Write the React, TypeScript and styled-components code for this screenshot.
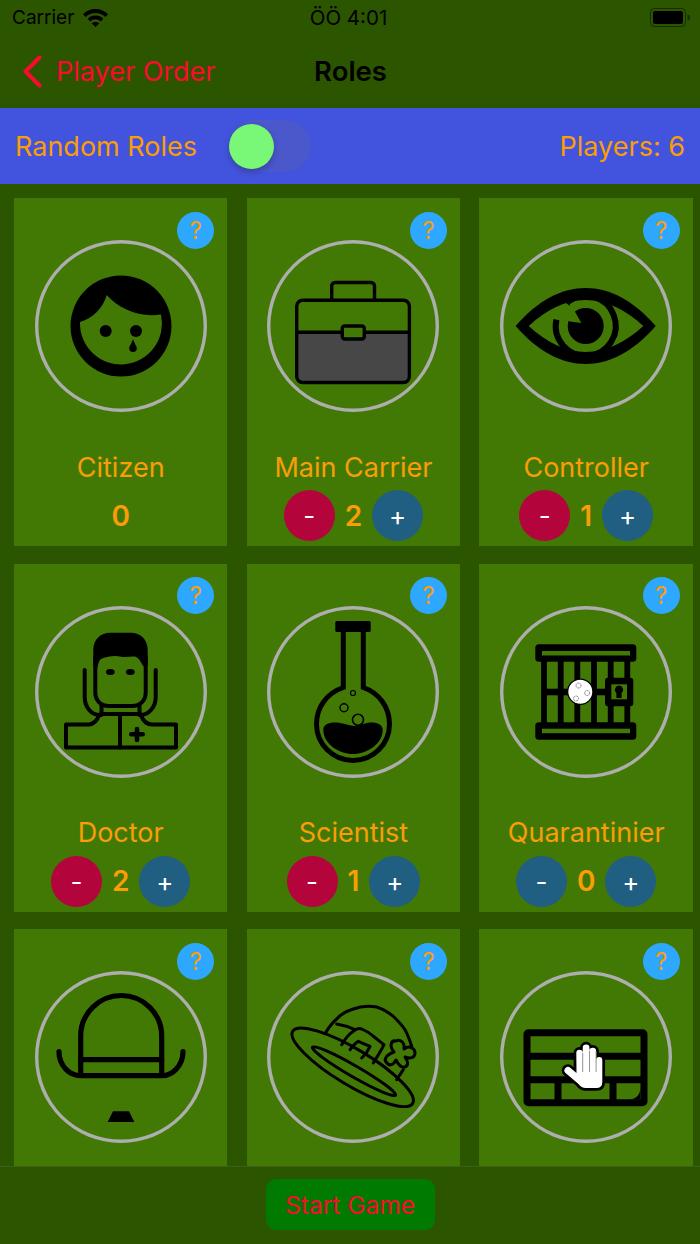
import React from "react";
import styled, { createGlobalStyle } from "styled-components";

const Global = createGlobalStyle`
  html, body { margin: 0; padding: 0; height: 1244px; overflow: hidden; background: #2c5500; }
  #root { height: 1244px; }
  * { box-sizing: border-box; }
`;

const font = `Inter, "Liberation Sans", sans-serif`;
const orange = "#fa9d06";
const red = "#fb0a2d";

const Page = styled.div`
  width: 700px; height: 1244px; display: flex; flex-direction: column;
  background: #2c5500; font-family: ${font};
`;
const Header = styled.header`
  height: 108px; flex: none; display: flex; flex-direction: column;
`;
const StatusBar = styled.div`
  height: 35px; display: grid; grid-template-columns: 1fr auto 1fr; align-items: center;
  padding: 0 9px 0 12px; color: #000; font-size: 19px;
`;
const StatusLeft = styled.div`
  display: flex; align-items: center; gap: 9px;
`;
const Clock = styled.span`
  font-size: 20.5px; margin-right: 6px;
`;
const StatusRight = styled.div`
  display: flex; justify-content: flex-end;
`;
const Nav = styled.nav`
  height: 73px; display: grid; grid-template-columns: 1fr auto 1fr; align-items: center;
  padding: 0 22px 1px; font-size: 27px;
`;
const Back = styled.div`
  display: flex; align-items: center; gap: 14px; color: ${red};
`;
const Title = styled.div`
  font-size: 27.5px; font-weight: 600; color: #000; margin-left: 1px;
`;
const OptionBar = styled.section`
  height: 76px; flex: none; display: flex; align-items: center; padding: 1px 15px 0;
  background: #4254de; color: ${orange}; font-size: 27px;
`;
const SwitchTrack = styled.div`
  width: 83px; height: 52px; margin: -1px 0 0 31px; border-radius: 26px;
  background: #4a58cc; padding: 3.5px 0 0 1px;
`;
const SwitchThumb = styled.div`
  width: 45px; height: 45px; border-radius: 50%; background: #78f876;
  box-shadow: 0 3px 6px rgba(0, 0, 0, 0.25);
`;
const Players = styled.div`
  margin-left: auto;
`;
const Main = styled.main`
  flex: 1; min-height: 0; overflow: hidden; padding: 14px 7px 0 13.9px;
  display: grid; grid-template-columns: repeat(3, 1fr); column-gap: 19.2px;
  row-gap: 17.5px; grid-auto-rows: 348px;
`;
const Card = styled.article`
  position: relative; background: #427905; display: flex; flex-direction: column;
  align-items: center; padding-top: 42.3px;
`;
const Help = styled.div`
  position: absolute; top: 13.7px; right: 13.3px; width: 37px; height: 37px; border-radius: 50%;
  background: #2ea7fe; color: ${orange}; font-size: 24px; display: flex;
  align-items: center; justify-content: center;
`;
const Circle = styled.div`
  width: 172px; height: 172px; border-radius: 50%; flex: none;
  box-shadow: inset 0 0 0 3.4px #aeaeae;
`;
const Label = styled.div`
  margin-top: 38.6px; height: 33px; line-height: 33px; font-size: 27px; color: ${orange};
  white-space: nowrap;
`;
const Controls = styled.div`
  margin-top: 6.4px; height: 51px; display: flex; align-items: center; gap: 10px;
`;
const Count = styled.div`
  font-size: 28px; font-weight: 600; color: ${orange};
`;
const Round = styled.div<{ $bg: string }>`
  width: 51px; height: 51px; border-radius: 50%; background: ${(p) => p.$bg};
  color: #fff; font-size: 26px; display: flex; align-items: center; justify-content: center;
`;
const Footer = styled.footer`
  height: 78px; flex: none; border-top: 1px solid #3d6018; background: #2c5500;
  display: flex; justify-content: center; padding-top: 12px;
`;
const StartButton = styled.div`
  width: 169px; height: 51px; border-radius: 10px; background: #007a00; color: ${red};
  font-size: 24.5px; display: flex; align-items: center; justify-content: center;
`;

const Ic: React.FC<{ children: React.ReactNode }> = ({ children }) => (
  <svg width={172} height={172} viewBox="0 0 172 172" style={{ display: "block" }}>{children}</svg>
);
const G = "#427905";

const Citizen = () => (
  <Ic>
    <circle cx="86" cy="86" r="50.5" fill="#000" />
    <path d="M45 82C58 78 68 68 71.7 55C84 69 105 78 126 74.5A41 41 0 1 1 45 82Z" fill={G} />
    <circle cx="70.7" cy="91" r="6" fill="#000" />
    <circle cx="101" cy="91" r="6" fill="#000" />
    <path d="M98 99C96.5 104 94.2 106 94.2 108.2a3.8 3.8 0 0 0 7.6 0C101.8 106 99.5 104 98 99Z" fill="#000" />
  </Ic>
);
const Carrier = () => (
  <Ic>
    <path d="M29.5 92.3H142.5V137a5.5 5.5 0 0 1-5.5 5.5H35a5.5 5.5 0 0 1-5.5-5.5Z" fill="#474747" />
    <g fill="none" stroke="#000" strokeWidth="3.4" strokeLinejoin="round">
      <rect x="29.7" y="60.3" width="112.7" height="82.2" rx="6" />
      <path d="M64.7 60V46a3.5 3.5 0 0 1 3.5-3.5H104a3.5 3.5 0 0 1 3.5 3.5V60" />
      <path d="M29.7 92.3H75M97 92.3H142.4" />
      <rect x="75.3" y="86" width="22" height="13" rx="2.5" fill={G} />
    </g>
  </Ic>
);
const Eye = () => (
  <Ic>
    <path d="M15.7 86C38 60 62 48 85.7 48S133 60 155.7 86C133 112 109 124 85.7 124S38 112 15.7 86Z" fill="#000" />
    <path d="M28.7 86C46 70 65 60 85.7 60S126 70 143.3 86C126 102 106 112 85.7 112S46 102 28.7 86Z" fill={G} />
    <path d="M56.4 79.7A30 30 0 1 0 67 62.5" fill="none" stroke="#000" strokeWidth="6" />
    <circle cx="85.7" cy="86" r="18" fill="#000" />
    <path d="M68.3 81.3L81.3 83L74.7 71.3L64 68Z" fill={G} />
    <path d="M64.7 62L70 66L68 58Z" fill="#000" />
  </Ic>
);
const Doctor = () => (
  <Ic>
    <path d="M58.3 60V44C58.3 33 66 26.7 75 26.7H96C105 26.7 112.7 33 112.7 44V60L108 60C106 56 104 52 100 50.5C95 50 90 52 85 50.5C80 49 72 50.5 67 52.5C64 54 63 58 62.5 62Z" fill="#000" />
    <path d="M60.3 50V86C60.3 95 66 100 74 100H97C105 100 110.7 95 110.7 86V50" fill="none" stroke="#000" strokeWidth="4" />
    <ellipse cx="75.3" cy="66" rx="4.4" ry="2.9" fill="#000" />
    <ellipse cx="95.3" cy="66" rx="4.4" ry="2.9" fill="#000" />
    <g fill="none" stroke="#000" strokeWidth="4" strokeLinecap="round" strokeLinejoin="round">
      <path d="M49.7 64V91C49.7 101 56 109 65 109H66.5V99" />
      <path d="M120.7 64V91C120.7 101 114 109 105 109H104.5V99" />
      <path d="M66 108H105" />
      <path d="M64 109C62 115 59 118 54 118.4H31V141.5H141V118.4H117C112 118.4 108 115 106 109" />
      <path d="M85 109V141.5" />
    </g>
    <path d="M102 123V134M96.3 128.3H107.7" stroke="#000" strokeWidth="4.6" strokeLinecap="round" />
  </Ic>
);
const Flask = () => (
  <Ic>
    <rect x="68.3" y="15" width="35.4" height="11" rx="1.5" fill="#000" />
    <path d="M76.3 24V81.5C60 87 49.5 101 49.5 118A36.5 36.5 0 0 0 122.5 118C122.5 101 112 87 96.3 81.5V24" fill="none" stroke="#000" strokeWidth="5" />
    <path d="M56.3 124C56 116 68 115 78 118C84 120 90 121 96 118C104 115 115.7 116 115.7 124C115.7 138 100 148 86 148C72 148 56.5 138 56.3 124Z" fill="#000" />
    <g fill="none" stroke="#000">
      <circle cx="86" cy="87" r="2.5" strokeWidth="1.2" />
      <circle cx="77" cy="101.7" r="4" strokeWidth="1.4" />
      <circle cx="91" cy="113.7" r="5.5" strokeWidth="1.6" />
    </g>
  </Ic>
);
const Cage = () => (
  <Ic>
    <rect x="35.3" y="38.3" width="101" height="17.4" rx="3.5" fill="#000" />
    <rect x="42" y="45" width="88" height="4.5" fill={G} />
    <rect x="35.3" y="116.3" width="101" height="17.4" rx="3.5" fill="#000" />
    <rect x="42" y="122.7" width="88" height="4.5" fill={G} />
    {[44, 60.7, 77.3, 94, 110.7, 127.3].map((x) => (
      <rect key={x} x={x - 2.9} y="54" width="5.8" height="64" fill="#000" />
    ))}
    <rect x="44" y="82.7" width="70" height="6.6" fill="#000" />
    <rect x="105" y="71.7" width="28.3" height="28.6" rx="3" fill="#000" />
    <rect x="111.3" y="78.3" width="15.7" height="15" fill={G} />
    <path d="M119 79.5a4.3 4.3 0 0 1 2.6 7.6V92H116.4V87.1A4.3 4.3 0 0 1 119 79.5Z" fill="#000" />
    <circle cx="80.3" cy="85.7" r="12.6" fill="#fff" stroke="#000" strokeWidth="1.2" />
    <g fill="none" stroke="#666" strokeWidth="1" strokeDasharray="1 .6">
      <circle cx="78.5" cy="79.5" r="2.5" />
      <circle cx="87.2" cy="87" r="2.5" />
      <circle cx="76" cy="92.5" r="2.5" />
    </g>
  </Ic>
);
const Bowler = () => (
  <Ic>
    <g fill="none" stroke="#000" strokeWidth="5.2" strokeLinecap="round">
      <path d="M45.7 104V65A40.5 40.5 0 0 1 126.7 65V104" />
      <path d="M45.7 88.7H126.7" />
      <path d="M24 80.7C24 94 34 104.7 45.7 104.7H126.7C138 104.7 148 94 148 80.7" />
    </g>
    <path d="M78 140.3H94L99.3 151H72.7Z" fill="#000" />
  </Ic>
);
const Hat = () => (
  <Ic>
    <g fill="none" stroke="#000" strokeWidth="3" strokeLinecap="round" strokeLinejoin="round">
      <ellipse cx="85.7" cy="96.3" rx="70" ry="18" transform="rotate(31 85.7 96.3)" />
      <ellipse cx="87" cy="100.2" rx="48" ry="5.5" transform="rotate(30 87 100.2)" />
      <path d="M58 62.7C62 56 65 52 69.7 48C74 43 80 40 86.3 38C94 35 103 35 109.7 36C116 38 121 41 126.3 45.3C131 50 135 54 138 58.7C141 64 143 70 144.7 75.3" />
      <path d="M69.7 53C76 54 82 56 88 58.7" />
      <path d="M74.7 73.7C78 68 82 63 86.3 60.3C89 58 92 57 94.7 58C99 60 103 62 106.3 65.3C110 68 113 71 117 73.7C114 80 110 86 106.3 92" />
      <path d="M83 78.7C86 75 88 72 91.3 70.3L103 75.3C101 80 98 84 94.7 87" />
      <path d="M136.3 98.7L129.7 108.7" />
      <path d="M127 81C122 75 124 69 129 70C133 68 138 71 137 78C142 74 148 77 148 82C148 87 143 88 138 86C141 90 142 94 138 96C134 97 131 93 129 89C127 93 123 96 120 92C116 89 119 84 127 81Z" fill={G} />
    </g>
  </Ic>
);
const Wall = () => (
  <Ic>
    <g fill="none" stroke="#000" strokeWidth="7">
      <rect x="27" y="61.8" width="117" height="70" rx="1.5" />
      <path d="M27 85.3H144M27 108.7H144M58 108.7V132M113 108.7V132" />
    </g>
    <path d="M140.5 116V128.5H128C136 128.5 140.5 124 140.5 116Z" fill="#000" />
    <g transform="translate(1.5 -1)">
      <path d="M74.8 83a3.2 3.2 0 0 1 6.4 0V78a3.4 3.4 0 0 1 6.8 0V81a3.3 3.3 0 0 1 6.6 0V90a3 3 0 0 1 6.2 0V112q0 6-6 6H84q-4 0-7-4L64 103a3.5 3.5 0 0 1 5-5l6 5Z" fill="#fff" stroke="#000" strokeWidth="5.5" paintOrder="stroke" strokeLinejoin="round" />
      <path d="M81.2 83V102M88 81V102M94.6 81V102" stroke="#888" strokeWidth="0.9" />
    </g>
  </Ic>
);

type Role = { name?: string; icon: React.ReactNode; count?: number; minus?: string };
const pink = "#b4043c";
const navy = "#205e82";
const roles: Role[] = [
  { name: "Citizen", icon: <Citizen />, count: 0 },
  { name: "Main Carrier", icon: <Carrier />, count: 2, minus: pink },
  { name: "Controller", icon: <Eye />, count: 1, minus: pink },
  { name: "Doctor", icon: <Doctor />, count: 2, minus: pink },
  { name: "Scientist", icon: <Flask />, count: 1, minus: pink },
  { name: "Quarantinier", icon: <Cage />, count: 0, minus: navy },
  { icon: <Bowler /> },
  { icon: <Hat /> },
  { icon: <Wall /> },
];

export default function App() {
  return (
    <Page>
      <Global />
      <Header>
        <StatusBar>
          <StatusLeft>
            <span>Carrier</span>
            <svg width="25" height="18" viewBox="0 0 25 18">
              <path d="M12.5 0C17.5 0 21.8 2 25 5.2L22.4 8C19.8 5.5 16.4 4 12.5 4S5.2 5.5 2.6 8L0 5.2C3.2 2 7.5 0 12.5 0Z" />
              <path d="M12.5 6.5C15.6 6.5 18.3 7.7 20.3 9.7L17.7 12.4C16.3 11.1 14.5 10.3 12.5 10.3S8.7 11.1 7.3 12.4L4.7 9.7C6.7 7.7 9.4 6.5 12.5 6.5Z" />
              <path d="M12.5 13C14 13 15.3 13.6 16.2 14.4L12.5 18L8.8 14.4C9.7 13.6 11 13 12.5 13Z" />
            </svg>
          </StatusLeft>
          <Clock>ÖÖ 4:01</Clock>
          <StatusRight>
            <svg width="41" height="19" viewBox="0 0 41 19">
              <rect x=".5" y=".5" width="35" height="18" rx="4" fill="none" stroke="#000" strokeOpacity=".45" />
              <rect x="3" y="3" width="30" height="13" rx="2" fill="#000" />
              <path d="M37.5 6.5c2 .3 2.5 1.5 2.5 3s-.5 2.7-2.5 3Z" fill="#000" fillOpacity=".45" />
            </svg>
          </StatusRight>
        </StatusBar>
        <Nav>
          <Back>
            <svg width="20" height="33" viewBox="0 0 20 33">
              <path d="M17.5 2.5L3.5 16.5L17.5 30.5" fill="none" stroke={red} strokeWidth="4" strokeLinecap="round" strokeLinejoin="round" />
            </svg>
            <span>Player Order</span>
          </Back>
          <Title>Roles</Title>
          <span />
        </Nav>
      </Header>
      <OptionBar>
        <span>Random Roles</span>
        <SwitchTrack>
          <SwitchThumb />
        </SwitchTrack>
        <Players>Players: 6</Players>
      </OptionBar>
      <Main>
        {roles.map((r, i) => (
          <Card key={i}>
            <Help>?</Help>
            <Circle>{r.icon}</Circle>
            {r.name && <Label>{r.name}</Label>}
            {r.count !== undefined && (
              <Controls>
                {r.minus && <Round $bg={r.minus}>-</Round>}
                <Count>{r.count}</Count>
                {r.minus && <Round $bg={navy}>+</Round>}
              </Controls>
            )}
          </Card>
        ))}
      </Main>
      <Footer>
        <StartButton>Start Game</StartButton>
      </Footer>
    </Page>
  );
}
